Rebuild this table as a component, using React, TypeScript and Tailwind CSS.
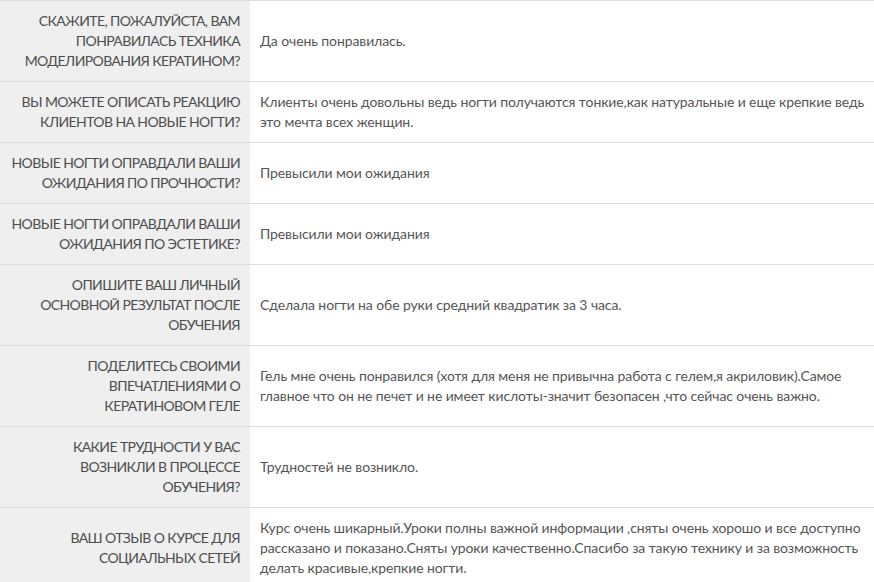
const rows: [string, string][] = [
  ['Скажите, пожалуйста, вам понравилась техника моделирования кератином?', 'Да очень понравилась.'],
  ['Вы можете описать реакцию клиентов на новые ногти?', 'Клиенты очень довольны ведь ногти получаются тонкие,как натуральные и еще крепкие ведь это мечта всех женщин.'],
  ['Новые ногти оправдали ваши ожидания по прочности?', 'Превысили мои ожидания'],
  ['Новые ногти оправдали ваши ожидания по эстетике?', 'Превысили мои ожидания'],
  ['Опишите ваш личный основной результат после обучения', 'Сделала ногти на обе руки средний квадратик за 3 часа.'],
  ['Поделитесь своими впечатлениями о кератиновом геле', 'Гель мне очень понравился (хотя для меня не привычна работа с гелем,я акриловик).Самое главное что он не печет и не имеет кислоты-значит безопасен ,что сейчас очень важно.'],
  ['Какие трудности у вас возникли в процессе обучения?', 'Трудностей не возникло.'],
  ['Ваш отзыв о курсе для социальных сетей', 'Курс очень шикарный.Уроки полны важной информации ,сняты очень хорошо и все доступно рассказано и показано.Сняты уроки качественно.Спасибо за такую технику и за возможность делать красивые,крепкие ногти.'],
];

export default function App() {
  return (
    <div className="w-[874px] bg-white font-['Lato',sans-serif] text-[14px] leading-[20px] text-[#555]">
      <table className="w-full table-fixed border-collapse">
        <tbody>
          {rows.map(([q, a], i) => (
            <tr key={i} className="border-t border-[#dedede]">
              <td className="w-[250px] bg-[#efefef] px-[10px] py-[10px] text-right align-middle uppercase tracking-[-0.6px] text-[#4d4d4d]">
                {q}
              </td>
              <td className="py-[10px] pl-[10px] pr-[6px] align-middle tracking-[-0.1px]">
                {a}
              </td>
            </tr>
          ))}
        </tbody>
      </table>
    </div>
  );
}
